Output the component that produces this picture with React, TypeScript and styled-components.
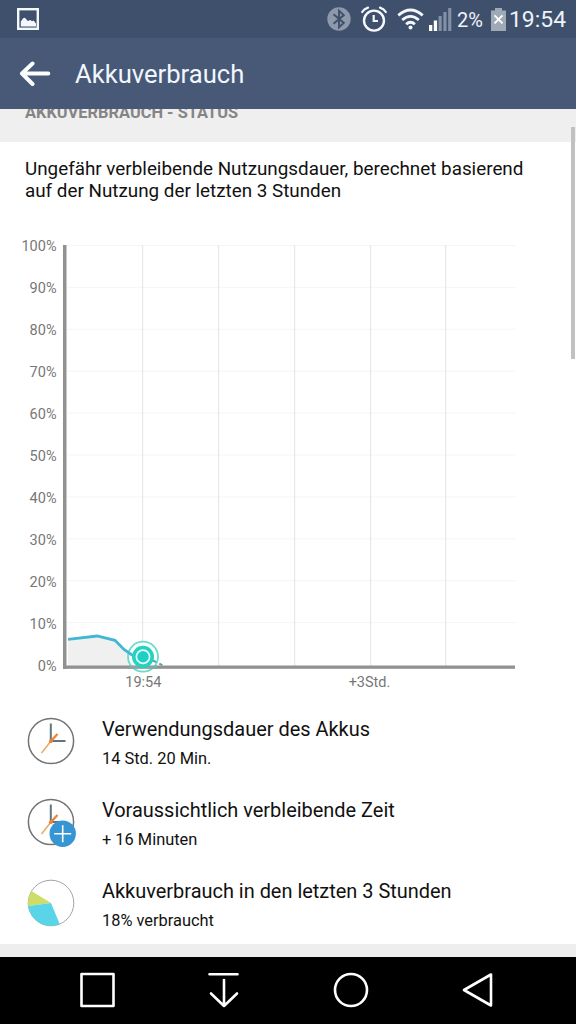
import React from "react";
import styled, { createGlobalStyle } from "styled-components";

const GlobalStyle = createGlobalStyle`
  * { box-sizing: border-box; }
  body { margin: 0; background: #fff; font-family: Roboto, "Liberation Sans", sans-serif; }
  svg { display: block; flex: none; }
`;

const Screen = styled.div`
  width: 576px;
  height: 1024px;
  display: flex;
  flex-direction: column;
  overflow: hidden;
  background: #fff;
`;

const StatusBar = styled.div`
  height: 38px;
  flex: none;
  background: #3f506d;
  color: #eef3fa;
  display: flex;
  align-items: center;
  justify-content: space-between;
  padding: 0 11px 0 17px;
`;

const StatusGroup = styled.div`
  display: flex;
  align-items: center;
`;

const Spacer = styled.span<{ $w: number }>`
  width: ${(p) => p.$w}px;
  flex: none;
`;

const StatusText = styled.span<{ $size: number; $width: number; $gap: number }>`
  font-size: ${(p) => p.$size}px;
  line-height: 38px;
  width: ${(p) => p.$width}px;
  margin-left: ${(p) => p.$gap}px;
  white-space: nowrap;
  padding-top: 2px;
`;

const AppBar = styled.header`
  height: 71px;
  flex: none;
  background: #475977;
  display: flex;
  align-items: center;
  padding-left: 19px;
  gap: 24px;
`;

const Title = styled.h1`
  margin: 0;
  padding-top: 1px;
  font-size: 25.6px;
  font-weight: 400;
  color: #f1f6fd;
  white-space: nowrap;
`;

const Content = styled.main`
  position: relative;
  flex: 1;
  min-height: 0;
  overflow: hidden;
  display: flex;
  flex-direction: column;
`;

const SectionHeader = styled.div`
  height: 33px;
  flex: none;
  background: #efefef;
  overflow: hidden;
  display: flex;
  align-items: flex-end;
  padding: 0 25px 19px;
`;

const SectionTitle = styled.h2`
  margin: 0;
  font-size: 16.4px;
  line-height: 20px;
  font-weight: 700;
  color: #858585;
  white-space: nowrap;
`;

const Description = styled.p`
  margin: 0;
  padding: 16px 0 0 25px;
  height: 88px;
  flex: none;
  font-size: 18.83px;
  line-height: 22px;
  color: #111;
  white-space: nowrap;
`;

const ChartSvg = styled.svg`
  width: 576px;
  height: 470px;
  font-family: Roboto, sans-serif;
  font-size: 14.5px;
  fill: #777;
`;

const List = styled.div`
  display: flex;
  flex-direction: column;
  flex: 1;
  padding-top: 1px;
`;

const Row = styled.div`
  height: 80.8px;
  flex: none;
  display: flex;
  align-items: center;
  padding-left: 26px;
  gap: 24px;
`;

const RowText = styled.div`
  display: flex;
  flex-direction: column;
  color: #111;
  white-space: nowrap;
  gap: 4px;
  padding-top: 6px;
`;

const RowTitle = styled.div`
  font-size: 19.95px;
  line-height: 26px;
`;

const RowValue = styled.div`
  font-size: 16.4px;
  line-height: 26px;
`;

const Footer = styled.div`
  height: 13px;
  flex: none;
  background: #eee;
`;

const ScrollThumb = styled.div`
  position: absolute;
  top: 18px;
  right: 1px;
  width: 4px;
  height: 232px;
  background: #c1c1c1;
`;

const NavBar = styled.nav`
  height: 67px;
  flex: none;
  background: #000;
  display: flex;
  align-items: center;
  padding: 0 0 1px 77px;
  gap: 87px;
`;

const PictureIcon = () => (
  <svg width="22" height="22" viewBox="0 0 22 22">
    <rect x="1.2" y="1.2" width="19.6" height="19.6" fill="none" stroke="#f4f8fc" strokeWidth="2.4" />
    <path d="M3.8 18.4V13.4L6 10.6Q7.3 9 8.6 10.6L10.8 13L13.4 12L15 13.2L16.6 12.4L19 15.4V18.4Z" fill="#f4f8fc" />
  </svg>
);

const BluetoothIcon = () => (
  <svg width="24" height="24" viewBox="0 0 24 24">
    <circle cx="12" cy="12" r="11.7" fill="#8d99ab" />
    <path d="M6.5 7.2L16.8 15.9L12 20.3V3.7L16.8 8.1L6.5 16.8" fill="none" stroke="#3f506d" strokeWidth="1.9" />
  </svg>
);

const AlarmIcon = () => (
  <svg width="26" height="26" viewBox="0 0 26 26" fill="none" stroke="#f4f8fc" strokeLinecap="round">
    <circle cx="13" cy="14.6" r="10" strokeWidth="2.4" />
    <path d="M12.7 9V15H17" strokeWidth="2.2" strokeLinecap="butt" />
    <path d="M1.2 6Q3 2.9 7 1.6M24.8 6Q23 2.9 19 1.6" strokeWidth="2.2" />
  </svg>
);

const WifiIcon = () => (
  <svg width="27" height="22" viewBox="0 0 27 22" fill="none" stroke="#f4f8fc" strokeWidth="2.8">
    <path d="M1.3 7.4Q13.5 -3.4 25.7 7.4" />
    <path d="M5.2 12Q13.5 4.8 21.8 12" />
    <path d="M9.1 16.2Q13.5 12.4 17.9 16.2" />
    <circle cx="13.5" cy="19.4" r="2" fill="#f4f8fc" stroke="none" />
  </svg>
);

const SignalIcon = () => (
  <svg width="23" height="23" viewBox="0 0 23 23">
    <rect x="0" y="17" width="3.3" height="6" fill="#fff" />
    <rect x="4.8" y="12.5" width="3.3" height="10.5" fill="#fff" />
    <rect x="9.6" y="8" width="3.1" height="15" fill="#8491a5" />
    <rect x="14.4" y="4" width="3.1" height="19" fill="#8491a5" />
    <rect x="19.2" y="0" width="3.1" height="23" fill="#8491a5" />
  </svg>
);

const BatteryIcon = () => (
  <svg width="15" height="23" viewBox="0 0 15 23">
    <path d="M4 0H11V2.5H15V23H0V2.5H4Z" fill="#a0aab7" />
    <path d="M3.5 7.3L11.5 15.3M11.5 7.3L3.5 15.3" stroke="#fff" strokeWidth="1.9" />
  </svg>
);

const BackArrow = () => (
  <svg width="32" height="26" viewBox="0 0 32 26" fill="none" stroke="#fbfdff" strokeWidth="4" strokeLinecap="round" strokeLinejoin="round">
    <path d="M3 12.5H29.3M13.5 2.5L3 12.5L13.5 23" />
  </svg>
);

const PERCENTS = [100, 90, 80, 70, 60, 50, 40, 30, 20, 10, 0];
const COLUMNS = [142, 218, 294, 370, 445];

const BatteryChart = () => (
  <ChartSvg viewBox="0 230 576 470">
    {PERCENTS.slice(0, -1).map((p) => (
      <rect key={p} x="67" y={245 + (100 - p) * 4.19} width="449" height="1" fill="#f5f5f5" />
    ))}
    {COLUMNS.map((x) => (
      <rect key={x} x={x} y="245" width="1.2" height="421" fill="#e8e8e8" />
    ))}
    {PERCENTS.map((p) => (
      <text key={p} x="56.5" y={251 + (100 - p) * 4.2} textAnchor="end">{p}%</text>
    ))}
    <path d="M68 639.3L97 636L115 640.3L124 649.5L132 655L143 657V666H68Z" fill="#f0f0f0" />
    <rect x="63" y="245" width="3.5" height="424" fill="#919191" />
    <rect x="63" y="665.5" width="452" height="3.3" fill="#919191" />
    <circle cx="143" cy="656.7" r="15" fill="#fff" fillOpacity="0.55" stroke="#6adccb" strokeWidth="1.8" />
    <path d="M68 639.3L97 636L115 640.3L124 649.5L132 655L143 657" fill="none" stroke="#43b7d2" strokeWidth="2.8" />
    <path d="M153 660.5L163 665.5" stroke="#5a9fa3" strokeWidth="2" strokeDasharray="3.5 3.5" />
    <rect x="129" y="665.5" width="28" height="3.3" fill="#8ba3a1" />
    <circle cx="143" cy="656.7" r="11" fill="#23d3c2" />
    <circle cx="143" cy="656.7" r="6.6" fill="#1fcfc4" stroke="#e9fffb" strokeWidth="1.7" />
    <text x="143.3" y="686.5" textAnchor="middle">19:54</text>
    <text x="369.5" y="686.5" textAnchor="middle">+3Std.</text>
  </ChartSvg>
);

const ClockIcon = ({ plus = false }: { plus?: boolean }) => (
  <svg width="52" height="52" viewBox="0 0 52 52">
    <circle cx="25" cy="26" r="22.6" fill="#fff" stroke="#737373" strokeWidth="1.5" />
    <path d="M24.8 8.5V26H39.5" fill="none" stroke="#607781" strokeWidth="2" />
    <path d="M15.5 38L25 26" stroke="#f0a35c" strokeWidth="1.4" />
    <path d="M24.5 26.5L31.5 19" stroke="#ee8434" strokeWidth="2.4" />
    <circle cx="24.8" cy="26.2" r="1.9" fill="#ee8434" />
    {plus && (
      <>
        <circle cx="36.7" cy="37.7" r="13.2" fill="#3795d3" />
        <path d="M28.2 37.7H45.2M36.7 29.2V46.2" stroke="#fff" strokeWidth="1.6" />
      </>
    )}
  </svg>
);

const PieIcon = () => (
  <svg width="52" height="52" viewBox="0 0 52 52">
    <circle cx="25" cy="26" r="22.8" fill="#fff" stroke="#9a9a9a" strokeWidth="0.9" />
    <path d="M25 26L2.2 29A23 23 0 0 1 5.4 14Z" fill="#cddd68" />
    <path d="M25 26L33.8 47.2A23 23 0 0 1 2.2 29Z" fill="#5ad5e8" />
  </svg>
);

const ROWS = [
  { icon: <ClockIcon />, title: "Verwendungsdauer des Akkus", value: "14 Std. 20 Min." },
  { icon: <ClockIcon plus />, title: "Voraussichtlich verbleibende Zeit", value: "+ 16 Minuten" },
  { icon: <PieIcon />, title: "Akkuverbrauch in den letzten 3 Stunden", value: "18% verbraucht" },
];

const NavIcon = ({ children }: { children: React.ReactNode }) => (
  <svg width="40" height="40" viewBox="0 0 40 40" fill="none" stroke="#fff" strokeWidth="2.6" strokeLinejoin="round" strokeLinecap="round">
    {children}
  </svg>
);

export default function App() {
  return (
    <>
      <GlobalStyle />
      <Screen>
        <StatusBar>
          <PictureIcon />
          <StatusGroup>
            <BluetoothIcon />
            <Spacer $w={10} />
            <AlarmIcon />
            <Spacer $w={9.5} />
            <WifiIcon />
            <Spacer $w={5.5} />
            <SignalIcon />
            <StatusText $size={20} $width={28} $gap={5}>2%</StatusText>
            <Spacer $w={6} />
            <BatteryIcon />
            <StatusText $size={22.9} $width={56} $gap={3}>19:54</StatusText>
          </StatusGroup>
        </StatusBar>
        <AppBar>
          <BackArrow />
          <Title>Akkuverbrauch</Title>
        </AppBar>
        <Content>
          <SectionHeader>
            <SectionTitle>AKKUVERBRAUCH - STATUS</SectionTitle>
          </SectionHeader>
          <Description>
            Ungefähr verbleibende Nutzungsdauer, berechnet basierend
            <br />
            auf der Nutzung der letzten 3 Stunden
          </Description>
          <BatteryChart />
          <List>
            {ROWS.map((row) => (
              <Row key={row.title}>
                {row.icon}
                <RowText>
                  <RowTitle>{row.title}</RowTitle>
                  <RowValue>{row.value}</RowValue>
                </RowText>
              </Row>
            ))}
          </List>
          <Footer />
          <ScrollThumb />
        </Content>
        <NavBar>
          <NavIcon>
            <rect x="4.5" y="4" width="32" height="32" />
          </NavIcon>
          <NavIcon>
            <path d="M5.5 4.2H33.5M20 10V36M7 23.5L20 36L33 23.5" />
          </NavIcon>
          <NavIcon>
            <circle cx="20" cy="20" r="16" />
          </NavIcon>
          <NavIcon>
            <path d="M33 4.5V35.5L6 20Z" />
          </NavIcon>
        </NavBar>
      </Screen>
    </>
  );
}
